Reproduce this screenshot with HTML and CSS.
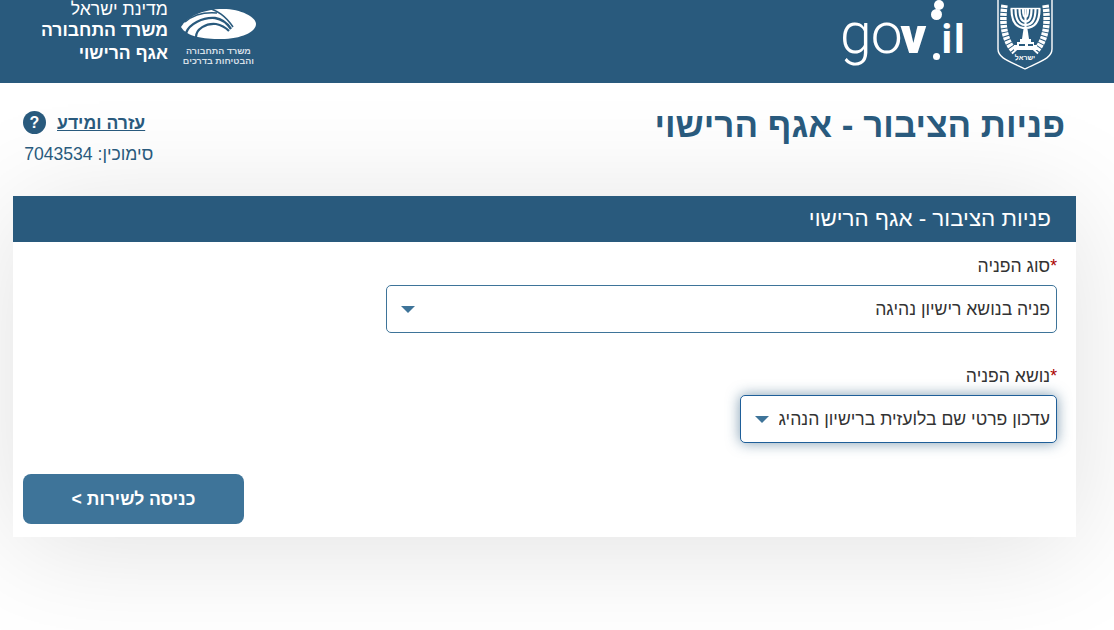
FILE: index.html
```html
<!DOCTYPE html>
<html lang="he" dir="rtl">
<head>
  <meta charset="UTF-8">
  <title>פניות הציבור - אגף הרישוי</title>
  <link rel="stylesheet" href="styles.css">
</head>
<body>
  <!-- Top bar -->
  <header class="top-bar">
    <div class="gov-logos">
      <svg class="emblem" width="58" height="71" viewBox="0 0 58 71" aria-label="סמל המדינה">
        <path d="M2 -2V50C2 60 16 63 29 70C42 63 56 60 56 50V-2" fill="none" stroke="#fff" stroke-width="1.4"/>
        <g fill="none" stroke="#fff" stroke-width="6.500" stroke-dasharray="3 1">
          <path d="M8.500 6C6 22 7 40 19 53"/>
          <path d="M49.500 6C52 22 51 40 39 53"/>
        </g>
        <g fill="none" stroke="#fff" stroke-width="2.200">
          <path d="M15.500 10C15.500 25 22 29 29.500 29C37 29 43.500 25 43.500 10"/>
          <path d="M19.500 10C19.500 22 24 26 29.500 26C35 26 39.500 22 39.500 10"/>
          <path d="M23.500 10C23.500 19 26 22.500 29.500 22.500C33 22.500 35.500 19 35.500 10"/>
          <path d="M27 10C27 15 28 18 29.500 18C31 18 32 15 32 10"/>
          <path d="M29.500 9V34"/>
          <path d="M14.500 9.500H44.500" stroke-width="1.400"/>
        </g>
        <path d="M27.500 30H31.500L33 40H26Z" fill="#fff"/>
        <path d="M24 40H35V43H38V46H41V51H18V46H21V43H24Z" fill="#fff"/>
        <path d="M23 45H29V47H23ZM32 45H37V47H32Z" fill="#295a7d"/>
        <text x="29" y="61" class="emblem-text" text-anchor="middle">ישראל</text>
      </svg>
      <div class="gov-mark">
        <span class="gov-go">go</span><span class="gov-v">v</span><span class="gov-il"><span class="gov-dot"></span>il</span>
        <span class="bubble bubble-top"></span>
        <span class="bubble bubble-low"></span>
      </div>
    </div>
    <div class="ministry">
      <div class="ministry-logo">
        <svg width="75" height="31" viewBox="0 0 75 31">
          <path d="M0 18C6 8 22 0 42 0C60 0 75 8 75 15C75 23 60 30 40 30C22 30 6 28 0 18Z" fill="#fff"/>
          <g fill="none" stroke="#295a7d">
            <path d="M4 13C12 6 24 3 36 4" stroke-width="1.600"/>
            <path d="M5 24C8 15 22 8 34 9C41 10 46 14 50 20" stroke-width="2.400"/>
            <path d="M15 28C15 20 25 14 35 15C40 16 44 18 48 22" stroke-width="2.200"/>
            <path d="M28 -1C36 2 44 6 52 18" stroke-width="1.600"/>
          </g>
        </svg>
        <div class="ministry-logo-text">משרד התחבורה<br>והבטיחות בדרכים</div>
      </div>
      <div class="ministry-text">
        <div class="first-line">מדינת ישראל</div>
        <div class="strong">משרד התחבורה</div>
        <div class="strong">אגף הרישוי</div>
      </div>
    </div>
  </header>

  <!-- Page title -->
  <div class="title-row">
    <h1>פניות הציבור - אגף הרישוי</h1>
    <div class="help">
      <div class="help-row">
        <a href="#" class="help-link">עזרה ומידע</a>
        <span class="help-icon">?</span>
      </div>
      <div class="ref-no">סימוכין: 7043534</div>
    </div>
  </div>

  <!-- Form -->
  <div class="card">
    <h2 class="card-title">פניות הציבור - אגף הרישוי</h2>
    <div class="card-body">
      <div class="field">
        <label class="field-label"><span class="req">*</span>סוג הפניה</label>
        <div class="select select-wide">
          <span class="select-value">פניה בנושא רישיון נהיגה</span>
          <span class="caret"></span>
        </div>
      </div>
      <div class="field">
        <label class="field-label"><span class="req">*</span>נושא הפניה</label>
        <div class="select select-narrow">
          <span class="select-value">עדכון פרטי שם בלועזית ברישיון הנהיג</span>
          <span class="caret"></span>
        </div>
      </div>
      <div class="actions">
        <a href="#" class="button">כניסה לשירות &gt;</a>
      </div>
    </div>
  </div>
</body>
</html>
```

FILE: styles.css
```css
html, body {
  height: 630px;
  overflow: hidden;
}

body {
  margin: 0;
  font-family: "Liberation Sans", Arial, sans-serif;
  background-color: #fff;
  color: #333;
}

.top-bar {
  display: flex;
  justify-content: space-between;
  height: 83px;
  padding: 0 60px 0 41px;
  background-color: #295a7d;
  color: #fff;
  overflow: hidden;
}

.gov-logos {
  display: flex;
  gap: 32px;
}

.emblem {
  display: block;
  margin-top: -1px;
}

.emblem-text {
  font-size: 7px;
  font-weight: bold;
  fill: #fff;
}

.gov-mark {
  position: relative;
  direction: ltr;
  display: flex;
  align-items: baseline;
  width: 123px;
  height: 83px;
  padding-top: 4px;
  box-sizing: border-box;
  font-family: Roboto, sans-serif;
  line-height: 60px;
}

.gov-go {
  margin-left: -1px;
  font-size: 57px;
  font-weight: 300;
  letter-spacing: -1px;
}

.gov-v {
  font-size: 50px;
  font-weight: 900;
  margin-left: -1px;
}

.gov-il {
  position: relative;
  padding-left: 15px;
  font-size: 40px;
  font-weight: 700;
  letter-spacing: 2px;
}

.gov-dot {
  position: absolute;
  left: 7px;
  top: 43px;
  width: 7px;
  height: 7px;
  border-radius: 50%;
  background-color: #fff;
}

.bubble {
  position: absolute;
  border-radius: 50%;
  background-color: #fff;
}

.bubble-top {
  left: 93px;
  top: 0;
  width: 10px;
  height: 10px;
}

.bubble-low {
  left: 90px;
  top: 9px;
  width: 11px;
  height: 11px;
}

.ministry {
  display: flex;
  gap: 13px;
}

.ministry-logo {
  width: 75px;
  padding-top: 9px;
}

.ministry-logo svg {
  display: block;
}

.ministry-logo-text {
  margin-top: 6px;
  font-size: 9px;
  line-height: 10px;
  font-weight: bold;
  color: #d5dfe6;
  text-align: center;
  white-space: nowrap;
}

.ministry-text {
  font-size: 17.6px;
  line-height: 23px;
}

.ministry-text .first-line {
  line-height: 19px;
}

.ministry-text .strong {
  font-weight: bold;
}

.title-row {
  display: flex;
  justify-content: space-between;
  align-items: flex-start;
  height: 113px;
  padding: 0 49px 0 22px;
  box-sizing: border-box;
}

h1 {
  margin: 21px 0 0;
  font-size: 35px;
  line-height: 42px;
  color: #295a7d;
}

.help {
  margin-top: 28px;
}

.help-row {
  display: flex;
  justify-content: flex-end;
  align-items: center;
  gap: 11px;
  padding: 0 8px 0 1px;
}

.help-link {
  padding-top: 2px;
  font-size: 17.6px;
  font-weight: bold;
  color: #295a7d;
}

.help-icon {
  width: 23px;
  height: 23px;
  border-radius: 50%;
  background-color: #295a7d;
  color: #fff;
  font-size: 16px;
  font-weight: bold;
  line-height: 23px;
  text-align: center;
}

.ref-no {
  margin-top: 8px;
  font-size: 17.6px;
  line-height: 24px;
  color: #295a7d;
}

.card {
  width: 1063px;
  margin-right: 38px;
  background-color: #fff;
  box-shadow: 0 10px 110px rgba(0, 0, 0, 0.12);
}

.card-title {
  margin: 0;
  height: 46px;
  padding-right: 25px;
  background-color: #295a7d;
  color: #fff;
  font-size: 22.4px;
  font-weight: normal;
  line-height: 46px;
}

.card-body {
  height: 295px;
  padding: 12px 19px 0 10px;
  box-sizing: border-box;
}

.field {
  height: 110px;
}

.field-label {
  display: block;
  height: 24px;
  font-size: 17.6px;
  line-height: 24px;
}

.req {
  color: #a00;
}

.select {
  display: flex;
  justify-content: space-between;
  align-items: center;
  height: 48px;
  margin-top: 7px;
  padding: 0 6px 0 14px;
  box-sizing: border-box;
  border: 1px solid #3e7499;
  border-radius: 5px;
  background-color: #fff;
  font-size: 17.6px;
}

.select-wide {
  width: 671px;
}

.select-narrow {
  width: 317px;
  border-color: #1f5f99;
  box-shadow: 0 0 14px rgba(41, 90, 125, 0.6);
}

.select-value {
  flex: 1;
  overflow: hidden;
  white-space: nowrap;
  margin-left: 10px;
}

.caret {
  flex: none;
  width: 0;
  height: 0;
  border-top: 7px solid #3e7499;
  border-left: 7px solid transparent;
  border-right: 7px solid transparent;
}

.actions {
  display: flex;
  justify-content: flex-end;
}

.button {
  width: 221px;
  height: 50px;
  border-radius: 8px;
  background-color: #3e7499;
  color: #fff;
  font-size: 17.6px;
  font-weight: bold;
  line-height: 50px;
  text-align: center;
  text-decoration: none;
}
```
